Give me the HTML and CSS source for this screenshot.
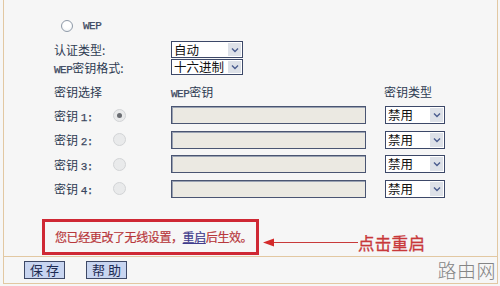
FILE: index.html
```html
<!DOCTYPE html>
<html>
<head>
<meta charset="utf-8">
<link rel="stylesheet" href="styles.css">
</head>
<body>
<div class="frame">
  <div class="main">
    <div class="form">
      <div class="row row-wep">
        <span class="radio radio-open"></span>
        <span class="latin">WEP</span>
      </div>
      <div class="row row-top first">
        <span class="label wide">认证类型:</span>
        <div class="select sel-auth"><span class="sel-text">自动</span><span class="sel-btn"><svg width="8" height="6" viewBox="0 0 8 6"><polyline points="1,1.5 4,4.5 7,1.5" fill="none" stroke="#4b5d8f" stroke-width="1.4"/></svg></span></div>
      </div>
      <div class="row row-top second">
        <span class="label wide"><span class="latin">WEP</span>密钥格式:</span>
        <div class="select sel-auth"><span class="sel-text">十六进制</span><span class="sel-btn"><svg width="8" height="6" viewBox="0 0 8 6"><polyline points="1,1.5 4,4.5 7,1.5" fill="none" stroke="#4b5d8f" stroke-width="1.4"/></svg></span></div>
      </div>
      <div class="row row-head">
        <span class="label wide">密钥选择</span>
        <span class="col-key"><span class="latin">WEP</span>密钥</span>
        <span class="col-type">密钥类型</span>
      </div>
      <div class="keys">
        <div class="row row-key">
          <span class="label">密钥 <span class="latin">1:</span></span>
          <span class="radio-cell"><span class="radio radio-dis checked"></span></span>
          <span class="input-cell"><span class="input"></span></span>
          <div class="select sel-type"><span class="sel-text">禁用</span><span class="sel-btn"><svg width="8" height="6" viewBox="0 0 8 6"><polyline points="1,1.5 4,4.5 7,1.5" fill="none" stroke="#4b5d8f" stroke-width="1.4"/></svg></span></div>
        </div>
        <div class="row row-key">
          <span class="label">密钥 <span class="latin">2:</span></span>
          <span class="radio-cell"><span class="radio radio-dis"></span></span>
          <span class="input-cell"><span class="input"></span></span>
          <div class="select sel-type"><span class="sel-text">禁用</span><span class="sel-btn"><svg width="8" height="6" viewBox="0 0 8 6"><polyline points="1,1.5 4,4.5 7,1.5" fill="none" stroke="#4b5d8f" stroke-width="1.4"/></svg></span></div>
        </div>
        <div class="row row-key">
          <span class="label">密钥 <span class="latin">3:</span></span>
          <span class="radio-cell"><span class="radio radio-dis"></span></span>
          <span class="input-cell"><span class="input"></span></span>
          <div class="select sel-type"><span class="sel-text">禁用</span><span class="sel-btn"><svg width="8" height="6" viewBox="0 0 8 6"><polyline points="1,1.5 4,4.5 7,1.5" fill="none" stroke="#4b5d8f" stroke-width="1.4"/></svg></span></div>
        </div>
        <div class="row row-key">
          <span class="label">密钥 <span class="latin">4:</span></span>
          <span class="radio-cell"><span class="radio radio-dis"></span></span>
          <span class="input-cell"><span class="input"></span></span>
          <div class="select sel-type"><span class="sel-text">禁用</span><span class="sel-btn"><svg width="8" height="6" viewBox="0 0 8 6"><polyline points="1,1.5 4,4.5 7,1.5" fill="none" stroke="#4b5d8f" stroke-width="1.4"/></svg></span></div>
        </div>
      </div>
    </div>
    <div class="notice-row">
      <div class="notice">您已经更改了无线设置，<span class="link">重启</span>后生效。</div>
      <div class="callout">
        <svg class="arrow" width="95" height="20" viewBox="0 0 95 20">
          <line x1="8" y1="9.5" x2="95" y2="9.5" stroke="#c83a3a" stroke-width="1"/>
          <polygon points="0,9.5 11,5.5 11,13.5" fill="#d42a2a"/>
        </svg>
        <span class="callout-text">点击重启</span>
      </div>
    </div>
  </div>
  <div class="bar">
    <span class="btn">保存</span>
    <span class="btn">帮助</span>
    <span class="mark">路由网</span>
  </div>
</div>
</body>
</html>
```

FILE: styles.css
```css
html, body {
  margin: 0;
  padding: 0;
}
body {
  background: #f6f6f6;
  font-family: "Noto Sans CJK SC", sans-serif;
  color: #2e3b52;
  font-size: 12px;
}
.frame {
  margin-left: 3px;
  width: 495px;
  height: 284px;
  box-sizing: border-box;
  border-left: 1px solid #e2c8a2;
  border-right: 1px solid #e2c8a2;
  border-bottom: 1px solid #e2c8a2;
  display: flex;
  flex-direction: column;
}
.main {
  height: 257px;
  box-sizing: border-box;
  border-bottom: 1px solid #e2c8a2;
}
.form {
  margin-left: 50px;
  padding-top: 17px;
}
.row {
  display: flex;
  align-items: center;
  height: 17px;
}
.latin {
  font-family: "Liberation Mono", monospace;
  font-size: 12px;
  color: #3a4660;
  -webkit-text-stroke: 0.25px #3a4660;
}
.row-wep {
  padding-left: 7px;
}
.row-wep .latin {
  margin-left: 10px;
  font-size: 11px;
  letter-spacing: -0.5px;
}
.radio {
  display: inline-block;
  box-sizing: border-box;
  border-radius: 50%;
}
.radio-open {
  width: 12px;
  height: 12px;
  border: 1px solid #8f9aa8;
  background: radial-gradient(circle at 50% 40%, #ffffff 40%, #e8ecf0 100%);
}
.radio-dis {
  width: 13px;
  height: 13px;
  border: 1px solid #d2d4d6;
  background: #e9eaeb;
  display: flex;
  align-items: center;
  justify-content: center;
}
.radio-dis.checked::after {
  content: "";
  width: 5px;
  height: 5px;
  border-radius: 50%;
  background: #6a6d72;
}
.first {
  margin-top: 7px;
}
.second {
  margin-top: 1px;
  height: 16px;
}
.label {
  width: 59px;
  flex: none;
  white-space: nowrap;
  font-size: 12px;
}
.label.wide {
  width: 117px;
}
.label .latin {
  font-size: 11px;
  letter-spacing: -0.5px;
}
.select {
  box-sizing: border-box;
  height: 17px;
  border: 1px solid #3c4868;
  background: #ffffff;
  display: flex;
  align-items: center;
  flex: none;
}
.second .select {
  height: 16px;
}
.sel-auth {
  width: 72px;
}
.sel-type {
  width: 60px;
  height: 18px;
}
.sel-text {
  flex: 1;
  color: #111111;
  font-size: 12.5px;
  line-height: 12px;
  padding-left: 2px;
  white-space: nowrap;
}
.sel-btn {
  width: 13px;
  align-self: stretch;
  margin: 1px;
  background: #dde1e8;
  display: flex;
  align-items: center;
  justify-content: center;
}
.row-head {
  margin-top: 8px;
}
.col-key {
  width: 213px;
  flex: none;
}
.col-key .latin {
  font-size: 11px;
  letter-spacing: -0.5px;
}
.keys {
  margin-top: 6px;
  display: flex;
  flex-direction: column;
  gap: 6.5px;
}
.row-key {
  height: 18px;
}
.radio-cell {
  width: 58px;
  flex: none;
  display: flex;
}
.input-cell {
  width: 214px;
  flex: none;
}
.input {
  display: block;
  box-sizing: border-box;
  width: 195px;
  height: 18px;
  border: 1px solid #4a5572;
  box-shadow: inset 1px 1px 0 #9aa2b2;
  background: #ebe9e2;
}
.notice-row {
  margin-top: 21px;
  margin-left: 38px;
  display: flex;
  align-items: flex-start;
}
.notice {
  box-sizing: border-box;
  width: 217px;
  height: 36px;
  border: 3px solid #cf2834;
  padding-left: 10px;
  font-size: 12px;
  line-height: 30px;
  color: #b8383c;
  white-space: nowrap;
  letter-spacing: -0.4px;
  -webkit-text-stroke: 0.2px #b8383c;
}
.link {
  color: #3f3b8c;
  text-decoration: underline;
  -webkit-text-stroke: 0.2px #3f3b8c;
}
.callout {
  margin-left: 4px;
  margin-top: 14px;
  height: 20px;
  display: flex;
  align-items: center;
}
.arrow {
  display: block;
}
.callout-text {
  font-size: 16.5px;
  line-height: 20px;
  color: #c8383a;
  letter-spacing: 0.3px;
  -webkit-text-stroke: 0.3px #c8383a;
}
.bar {
  flex: 1;
  display: flex;
  align-items: center;
  padding-left: 20px;
  padding-right: 1px;
}
.btn {
  box-sizing: border-box;
  width: 41px;
  height: 18px;
  margin-right: 21px;
  border: 1px solid #3d4866;
  background: #c8d5f0;
  color: #1e2b52;
  font-size: 13px;
  line-height: 16px;
  letter-spacing: 3px;
  text-indent: 3px;
  text-align: center;
}
.mark {
  margin-left: auto;
  font-size: 19px;
  line-height: 22px;
  color: #858585;
  font-weight: 300;
  letter-spacing: 0.5px;
}
```
